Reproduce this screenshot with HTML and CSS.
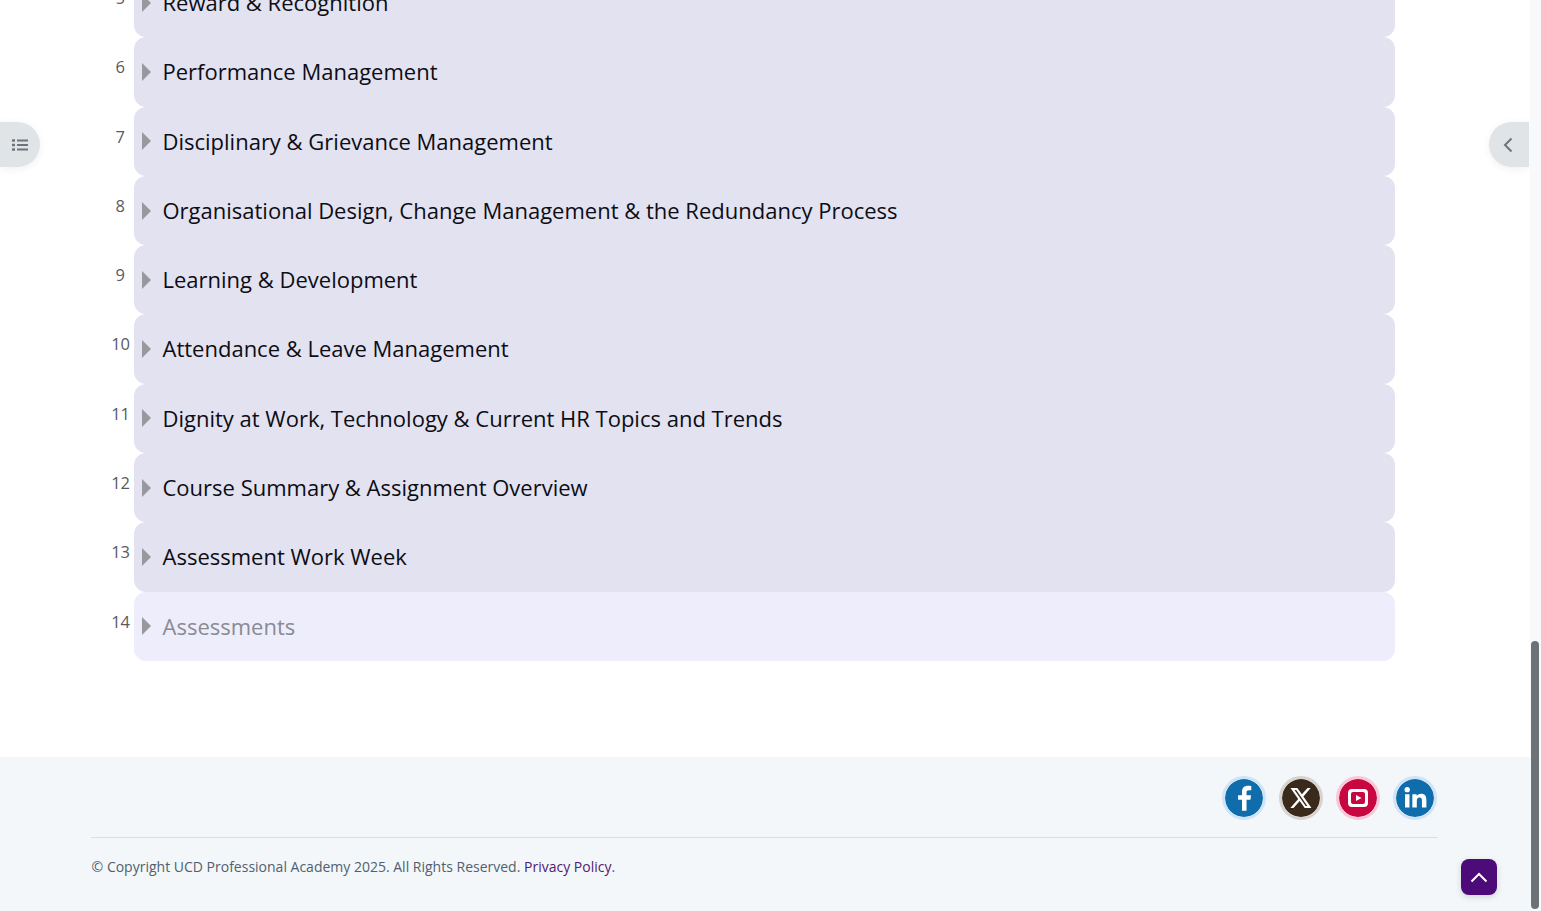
FILE: index.html
```html
<!DOCTYPE html>
<html lang="en">
<head>
<meta charset="utf-8">
<title>Course outline</title>
<link rel="stylesheet" href="styles.css">
</head>
<body>
<div class="page">
  <div class="content">
    <main class="outline">
      <ol class="sections">
        <li class="section"><span class="num">5</span><div class="bar"><svg class="caret" viewBox="0 0 9 18"><path d="M0 0L9 9L0 18Z"/></svg><span class="title">Reward &amp; Recognition</span></div></li>
        <li class="section"><span class="num">6</span><div class="bar"><svg class="caret" viewBox="0 0 9 18"><path d="M0 0L9 9L0 18Z"/></svg><span class="title">Performance Management</span></div></li>
        <li class="section"><span class="num">7</span><div class="bar"><svg class="caret" viewBox="0 0 9 18"><path d="M0 0L9 9L0 18Z"/></svg><span class="title">Disciplinary &amp; Grievance Management</span></div></li>
        <li class="section"><span class="num">8</span><div class="bar"><svg class="caret" viewBox="0 0 9 18"><path d="M0 0L9 9L0 18Z"/></svg><span class="title">Organisational Design, Change Management &amp; the Redundancy Process</span></div></li>
        <li class="section"><span class="num">9</span><div class="bar"><svg class="caret" viewBox="0 0 9 18"><path d="M0 0L9 9L0 18Z"/></svg><span class="title">Learning &amp; Development</span></div></li>
        <li class="section"><span class="num">10</span><div class="bar"><svg class="caret" viewBox="0 0 9 18"><path d="M0 0L9 9L0 18Z"/></svg><span class="title">Attendance &amp; Leave Management</span></div></li>
        <li class="section"><span class="num">11</span><div class="bar"><svg class="caret" viewBox="0 0 9 18"><path d="M0 0L9 9L0 18Z"/></svg><span class="title">Dignity at Work, Technology &amp; Current HR Topics and Trends</span></div></li>
        <li class="section"><span class="num">12</span><div class="bar"><svg class="caret" viewBox="0 0 9 18"><path d="M0 0L9 9L0 18Z"/></svg><span class="title">Course Summary &amp; Assignment Overview</span></div></li>
        <li class="section"><span class="num">13</span><div class="bar"><svg class="caret" viewBox="0 0 9 18"><path d="M0 0L9 9L0 18Z"/></svg><span class="title">Assessment Work Week</span></div></li>
        <li class="section locked"><span class="num">14</span><div class="bar"><svg class="caret" viewBox="0 0 9 18"><path d="M0 0L9 9L0 18Z"/></svg><span class="title">Assessments</span></div></li>
      </ol>
    </main>
    <footer class="footer">
      <div class="social">
        <a class="soc soc-blue" href="#" aria-label="Facebook"><svg viewBox="0 0 36 36"><path d="M20.400 30V19.600h3.700l.6-4.300h-4.300v-2.600c0-1.300.5-2.100 2.200-2.100h2.300V6.700c-.6-.1-1.900-.2-3.200-.2-3.300 0-5.600 2-5.600 5.600v3.200h-3.700v4.300h3.700V30z" fill="#fff"/></svg></a>
        <a class="soc soc-x" href="#" aria-label="X"><svg viewBox="0 0 38 38"><path fill-rule="evenodd" d="M8.500 9h6.800l4.600 6.300L25.500 9h3.200l-7.300 8.400L29.500 29h-6.800l-5-6.900L11.500 29H8.300l7.900-9zM12.500 11l11.200 16h1.700L14.200 11z" fill="#fff"/></svg></a>
        <a class="soc soc-red" href="#" aria-label="YouTube"><svg viewBox="0 0 38 38"><path fill-rule="evenodd" d="M13 10h12a4 4 0 0 1 4 4v10a4 4 0 0 1-4 4H13a4 4 0 0 1-4-4V14a4 4 0 0 1 4-4zM14 13a2 2 0 0 0-2 2v8a2 2 0 0 0 2 2h10a2 2 0 0 0 2-2v-8a2 2 0 0 0-2-2z" fill="#fff"/><path d="M17 16l5.500 3-5.500 3z" fill="#fff"/></svg></a>
        <a class="soc soc-blue" href="#" aria-label="LinkedIn"><svg viewBox="-2 -2 40 40"><circle cx="9.800" cy="9.200" r="2.800" fill="#fff"/><path d="M7.500 14h4.700v14H7.500zM15.200 14h4.500v2c.8-1.300 2.500-2.400 4.700-2.400 4.400 0 5.600 2.800 5.600 6.900V28h-4.700v-6.800c0-2-.4-3.600-2.500-3.600-2.200 0-2.900 1.600-2.900 3.700V28h-4.700z" fill="#fff"/></svg></a>
      </div>
      <p class="legal">© Copyright UCD Professional Academy 2025. All Rights Reserved. <a href="#">Privacy Policy</a>.</p>
    </footer>
    <button class="drawer drawer-left" aria-label="Contents"><svg viewBox="0 0 16 14"><path d="M5 2.500h11M5 7h11M5 11.500h11" stroke="#6c757d" stroke-width="2" fill="none"/><path d="M0 1.200h3v2.600H0zM0 5.700h3v2.600H0zM0 10.200h3v2.600H0z" fill="#6c757d"/></svg></button>
    <button class="drawer drawer-right" aria-label="Activity"><svg viewBox="0 0 10 16"><path d="M8.500 1.500L2 8l6.500 6.500" stroke="#6c757d" stroke-width="2" fill="none"/></svg></button>
    <a class="to-top" href="#" aria-label="Back to top"><svg viewBox="0 0 18 11"><path d="M1.500 9.500L9 2l7.500 7.500" stroke="#fff" stroke-width="2" fill="none"/></svg></a>
  </div>
  <div class="scrolltrack"><div class="scrollthumb"></div></div>
</div>
</body>
</html>
```

FILE: styles.css
```css
* { box-sizing: border-box; }
html, body { margin: 0; height: 100%; overflow: hidden; }
body { font-family: "Open Sans", "Liberation Sans", sans-serif; background: #fff; color: #0f0f14; }

.page { display: flex; height: 100vh; }
.content { position: relative; flex: 1; min-width: 0; display: flex; flex-direction: column; }

.outline { flex: 1; min-height: 0; overflow: hidden; display: flex; flex-direction: column; justify-content: flex-end; padding: 0 135px 96.05px 100px; }
.sections { list-style: none; margin: 0; padding: 0; }
.section { display: flex; align-items: center; height: 69.3px; }
.num { width: 30px; margin-right: 4px; padding-bottom: 9.3px; text-align: right; font-size: 16.5px; line-height: 22px; color: #5a5a5f; }
.section:nth-child(-n+5) .num { padding-right: 5px; }
.bar { flex: 1; height: 100%; display: flex; align-items: center; gap: 11.5px; padding-left: 8px; padding-bottom: 1.3px; background: #e2e2f1; border-radius: 12px; }
.caret { width: 9px; height: 18px; flex: none; margin-top: 1.4px; fill: #98989e; }
.title { font-size: 22px; line-height: 30px; color: #0d0d14; }
.locked .bar { background: #ededfc; }
.locked .title { color: #8a8a92; }

.footer { flex: none; height: 154px; padding: 0 92px 0 91px; background: #f3f7fa; }
.social { display: flex; justify-content: flex-end; gap: 13px; padding: 19px 1px 17px 0; border-bottom: 1px solid #d9dfe3; }
.soc { width: 44px; height: 44px; display: flex; align-items: center; justify-content: center; border-radius: 50%; border: 3px solid; background-clip: padding-box; }
.soc svg { width: 38px; height: 38px; display: block; }
.soc-blue { background-color: #0f6dab; border-color: #cfe4f6; }
.soc-x { background-color: #3a2a1c; border-color: #d8d3ce; }
.soc-red { background-color: #c8063f; border-color: #f9c8d8; }
.legal { margin: 0; padding: 19px 0 0 .6px; font-size: 14px; line-height: 19px; color: #51606f; }
.legal a { color: #521a70; text-decoration: none; }

.drawer { position: absolute; top: 122px; width: 40px; height: 45px; padding: 0; border: 0; background: #e0e4e7; display: flex; align-items: center; justify-content: center; box-shadow: 0 2px 8px rgba(0, 0, 0, .06); }
.drawer-left { left: 0; border-radius: 0 23px 23px 0; }
.drawer-left svg { width: 16px; height: 14px; }
.drawer-right { right: 1px; border-radius: 23px 0 0 23px; }
.drawer-right svg { width: 10px; height: 16px; margin-right: 2px; }

.to-top { position: absolute; left: 1461px; bottom: 16px; width: 36px; height: 36px; display: flex; align-items: center; justify-content: center; border-radius: 8px; background: #4c0b78; box-shadow: 0 2px 6px rgba(0, 0, 0, .15); }
.to-top svg { width: 18px; height: 11px; }

.scrolltrack { flex: none; width: 11px; background: #f8f9fb; position: relative; }
.scrollthumb { position: absolute; left: 1px; top: 641px; width: 8px; height: 268px; border-radius: 4px; background: #6c7378; }
```
